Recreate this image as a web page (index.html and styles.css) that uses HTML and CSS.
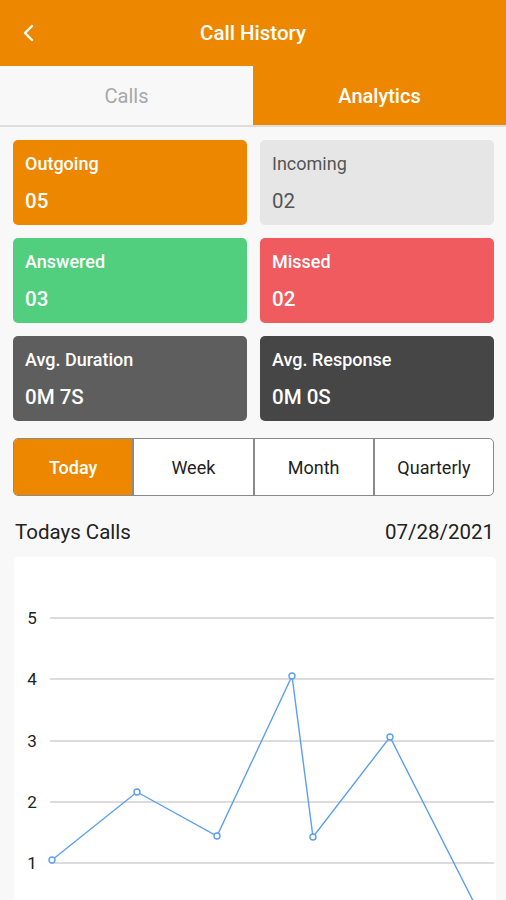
FILE: index.html
```html
<!DOCTYPE html>
<html lang="en">
<head>
  <meta charset="UTF-8">
  <meta name="viewport" content="width=device-width, initial-scale=1.0">
  <title>Call History</title>
  <link rel="stylesheet" href="styles.css">
</head>
<body>
  <header class="topbar">
    <svg class="back" width="14" height="20" viewBox="0 0 14 20"><path d="M11 3 L4 10 L11 17" fill="none" stroke="#fff" stroke-width="2.4" stroke-linecap="round" stroke-linejoin="round"/></svg>
    <h1>Call History</h1>
  </header>

  <nav class="tabs">
    <div class="tab">Calls</div>
    <div class="tab active">Analytics</div>
  </nav>

  <section class="stats">
    <div class="stat orange"><span class="label">Outgoing</span><span class="value">05</span></div>
    <div class="stat light"><span class="label">Incoming</span><span class="value">02</span></div>
    <div class="stat green"><span class="label">Answered</span><span class="value">03</span></div>
    <div class="stat red"><span class="label">Missed</span><span class="value">02</span></div>
    <div class="stat grey"><span class="label">Avg. Duration</span><span class="value">0M 7S</span></div>
    <div class="stat dark"><span class="label">Avg. Response</span><span class="value">0M 0S</span></div>
  </section>

  <div class="range">
    <div class="seg active">Today</div>
    <div class="seg">Week</div>
    <div class="seg">Month</div>
    <div class="seg">Quarterly</div>
  </div>

  <div class="chart-head">
    <span>Todays Calls</span>
    <span>07/28/2021</span>
  </div>

  <div class="chart">
    <svg width="482" height="380" viewBox="0 0 482 380">
      <g stroke="#dcdcdc" stroke-width="2">
        <line x1="36" y1="61" x2="480" y2="61"/>
        <line x1="36" y1="122" x2="480" y2="122"/>
        <line x1="36" y1="184" x2="480" y2="184"/>
        <line x1="36" y1="245" x2="480" y2="245"/>
        <line x1="36" y1="306" x2="480" y2="306"/>
      </g>
      <g class="axis" font-size="17" fill="#222" text-anchor="middle">
        <text x="18" y="67">5</text>
        <text x="18" y="128">4</text>
        <text x="18" y="190">3</text>
        <text x="18" y="251">2</text>
        <text x="18" y="312">1</text>
      </g>
      <polyline points="38,303 123,235 203,279 278,119 299,280 376,180 480,385" fill="none" stroke="#5b9ff0" stroke-width="1.4"/>
      <g fill="#fff" stroke="#5b9ff0" stroke-width="1.4">
        <circle cx="38" cy="303" r="3"/>
        <circle cx="123" cy="235" r="3"/>
        <circle cx="203" cy="279" r="3"/>
        <circle cx="278" cy="119" r="3"/>
        <circle cx="299" cy="280" r="3"/>
        <circle cx="376" cy="180" r="3"/>
      </g>
    </svg>
  </div>
</body>
</html>
```

FILE: styles.css
```css
body { margin: 0; font-family: Roboto, "Noto Sans", sans-serif; background: #f8f8f8; }
.topbar { height: 66px; background: #ee8700; display: flex; align-items: center; justify-content: center; position: relative; }
.topbar h1 { margin: 0; font-size: 20.5px; font-weight: 500; color: #fff; }
.back { position: absolute; left: 21px; top: 23px; }
.tabs { display: flex; height: 59px; border-bottom: 2px solid #dedede; }
.tab { flex: 1; display: flex; align-items: center; justify-content: center; font-size: 20px; color: #a8a8a8; background: #f8f8f8; }
.tab.active { background: #ee8700; color: #fff; font-weight: 500; }
.stats { display: grid; grid-template-columns: 1fr 1fr; gap: 13px; padding: 13px 12px 0 13px; }
.stat { height: 85px; border-radius: 5px; padding: 12px 12px 0; box-sizing: border-box; display: flex; flex-direction: column; color: #fff; }
.stat .label { font-size: 18px; font-weight: 500; line-height: 24px; }
.stat .value { font-size: 20.5px; font-weight: 500; line-height: 24px; margin-top: 13px; }
.orange { background: #ee8700; }
.light { background: #e6e6e6; color: #555; }
.light .label, .light .value { font-weight: 400; }
.green { background: #52cf7e; }
.red { background: #f05b5f; }
.grey { background: #5e5e5e; }
.dark { background: #464646; }
.range { display: flex; margin: 17px 12px 0 13px; height: 58px; border: 1.5px solid #8a8a8a; border-radius: 5px; overflow: hidden; box-sizing: border-box; background: #fff; }
.seg { flex: 1; display: flex; align-items: center; justify-content: center; font-size: 18px; color: #222; border-left: 2px solid #8a8a8a; }
.seg:first-child { border-left: none; }
.seg.active { background: #ee8700; color: #fff; font-weight: 500; }
.chart-head { display: flex; justify-content: space-between; margin: 24px 12px 0 15px; font-size: 20.5px; color: #222; line-height: 24px; }
.chart { margin: 13px 10px 0 14px; background: #fff; border-radius: 5px; height: 380px; overflow: hidden; }
.chart svg { display: block; }
.axis { font-family: Roboto, sans-serif; }
```
